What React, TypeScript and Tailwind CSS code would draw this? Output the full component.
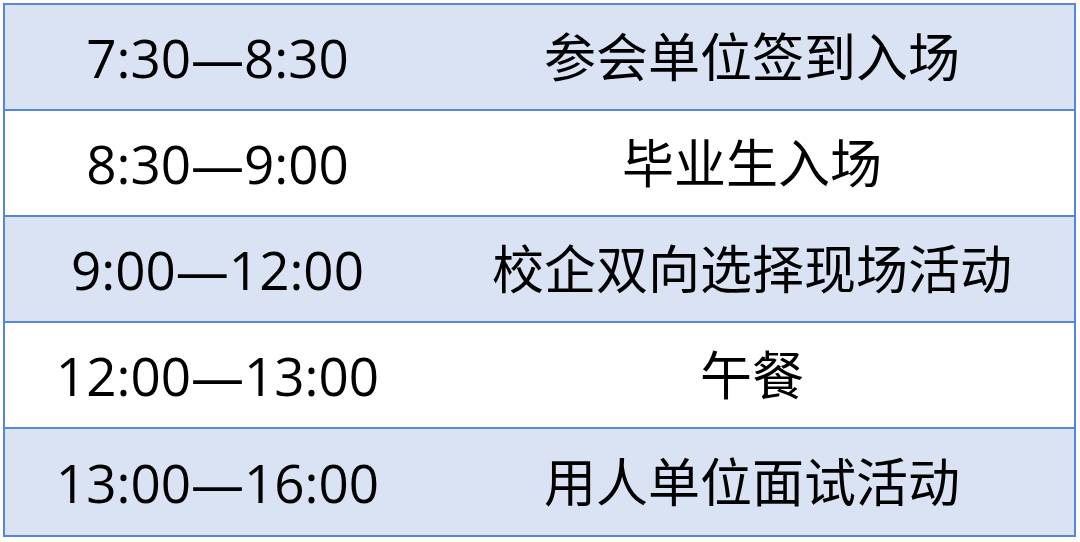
import React from 'react';

const rows = [
  { time: '7:30—8:30', item: '参会单位签到入场' },
  { time: '8:30—9:00', item: '毕业生入场' },
  { time: '9:00—12:00', item: '校企双向选择现场活动' },
  { time: '12:00—13:00', item: '午餐' },
  { time: '13:00—16:00', item: '用人单位面试活动' },
];

export default function App() {
  return (
    <div
      className="w-[1080px] h-[542px] bg-white pt-[3px] pl-[3px]"
      style={{ fontFamily: '"Open Sans", "Noto Sans CJK SC", sans-serif' }}
    >
      <div className="w-[1073px] border-2 border-[#5686d8] flex flex-col">
        {rows.map((row, i) => (
          <div
            key={row.time}
            className={`flex h-[106px] items-center text-black border-[#5686d8] ${
              i % 2 === 0 ? 'bg-[#dae3f3]' : 'bg-white'
            } ${i < rows.length - 1 ? 'border-b-2' : ''}`}
          >
            <div className="w-[425px] text-center text-[53px] leading-none">{row.time}</div>
            <div className="flex-1 text-center text-[52px] leading-none">{row.item}</div>
          </div>
        ))}
      </div>
    </div>
  );
}
